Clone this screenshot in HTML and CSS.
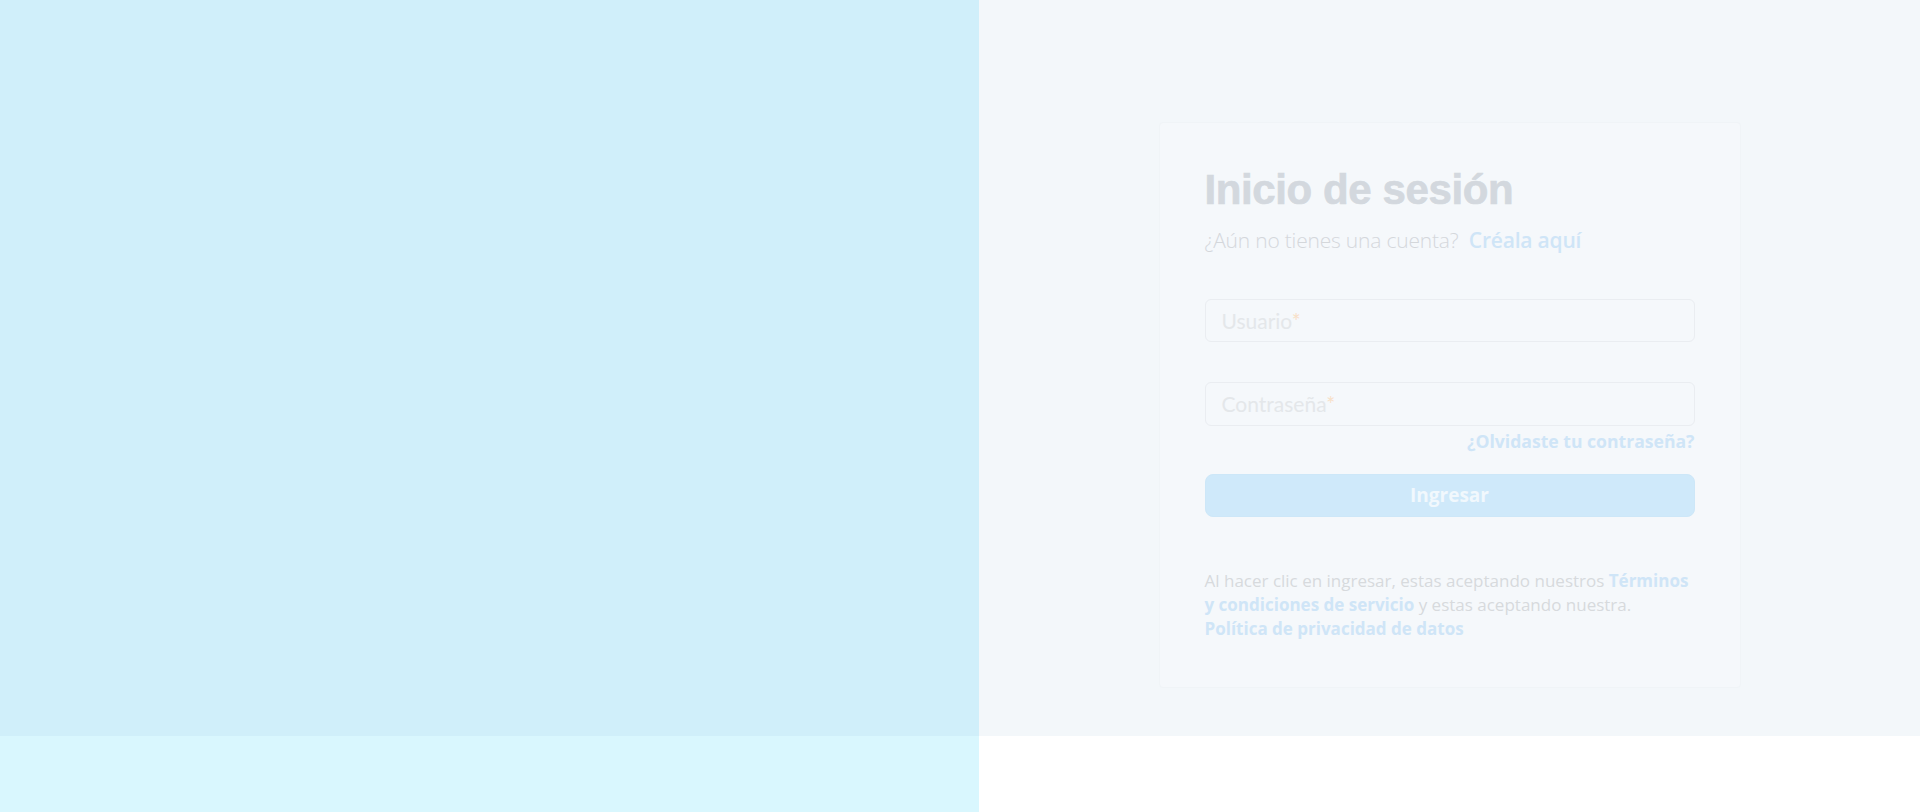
FILE: index.html
```html
<!DOCTYPE html>
<html lang="es">
<head>
<meta charset="utf-8">
<title>Inicio de sesión</title>
<link rel="stylesheet" href="styles.css">
</head>
<body>
<div class="page">
  <div class="top">
    <div class="hero"></div>
    <div class="side">
      <div class="card">
        <h1 class="title">Inicio de sesión</h1>
        <p class="subtitle">¿Aún no tienes una cuenta?&nbsp; <a class="link" href="#">Créala aquí</a></p>
        <div class="field field-user"><span class="ph">Usuario<span class="req">*</span></span></div>
        <div class="field field-pass"><span class="ph">Contraseña<span class="req">*</span></span></div>
        <div class="forgot-row"><a class="forgot" href="#">¿Olvidaste tu contraseña?</a></div>
        <button class="btn" type="button">Ingresar</button>
        <p class="terms">Al hacer clic en ingresar, estas aceptando nuestros <a class="tlink" href="#">Términos</a><br><a class="tlink" href="#">y condiciones de servicio</a> y estas aceptando nuestra.<br><a class="tlink" href="#">Política de privacidad de datos</a></p>
      </div>
    </div>
  </div>
  <div class="bottom">
    <div class="bottom-left"></div>
    <div class="bottom-right"></div>
  </div>
</div>
</body>
</html>
```
FILE: styles.css
```css
* { box-sizing: border-box; }
html, body { margin: 0; padding: 0; }
body {
  width: 1920px;
  height: 812px;
  overflow: hidden;
  background: #ffffff;
  font-family: "Open Sans", "Lato", sans-serif;
}
.page { display: flex; flex-direction: column; height: 812px; }
.top { display: flex; height: 736px; }
.hero { width: 979px; background: #d0effa; }
.side {
  flex: 1;
  background: #f3f7fa;
  display: flex;
  justify-content: center;
  align-items: flex-start;
  padding-top: 122px;
}
.card {
  width: 582px;
  height: 566px;
  background: #f5f8fb;
  border: 1px solid #f0f4f7;
  border-radius: 4px;
  padding: 42px 45px 46px;
  display: flex;
  flex-direction: column;
}
.title {
  margin: 0;
  font-family: "Liberation Sans", Arial, sans-serif;
  font-weight: 700;
  font-size: 42px;
  line-height: 50px;
  letter-spacing: -0.4px;
  -webkit-text-stroke: 0.7px #d3d8de;
  color: #d3d8de;
}
.subtitle {
  margin: 11px 0 0;
  font-family: "Open Sans", sans-serif;
  font-weight: 300;
  font-size: 21px;
  line-height: 28px;
  letter-spacing: -0.2px;
  color: #d4d7db;
}
.link { color: #cfe5f7; font-weight: 600; text-decoration: none; }
.field {
  height: 48px;
  border: 1px solid #eaedf1;
  border-radius: 6px;
  background: #f5f8fb;
  display: flex;
  align-items: center;
  padding-left: 16px;
}
.field-user { margin-top: 45px; }
.field-pass { margin-top: 40px; }
.ph {
  font-family: "Lato", sans-serif;
  font-size: 21px;
  color: #e4e7ea;
}
.req { color: #f8e0c8; }
.forgot-row { display: flex; justify-content: flex-end; margin-top: 4px; }
.forgot {
  font-family: "Open Sans", sans-serif;
  font-weight: 700;
  font-size: 17.6px;
  line-height: 22px;
  color: #cfe5f7;
  text-decoration: none;
}
.btn {
  margin-top: 22px;
  height: 48px;
  width: 100%;
  border: 1px solid #cde7f8;
  border-radius: 8px;
  background: #cfe9fa;
  color: #f1f8fd;
  font-family: "Open Sans", sans-serif;
  font-weight: 700;
  font-size: 19px;
  cursor: pointer;
}
.terms {
  margin: 52px 0 0;
  font-family: "Open Sans", sans-serif;
  font-size: 17px;
  line-height: 24px;
  color: #d7dadd;
  white-space: nowrap;
}
.tlink { color: #cfe5f7; font-weight: 700; text-decoration: none; }
.bottom { display: flex; height: 76px; }
.bottom-left { width: 979px; background: #d9f7fe; }
.bottom-right { flex: 1; background: #ffffff; }
```
